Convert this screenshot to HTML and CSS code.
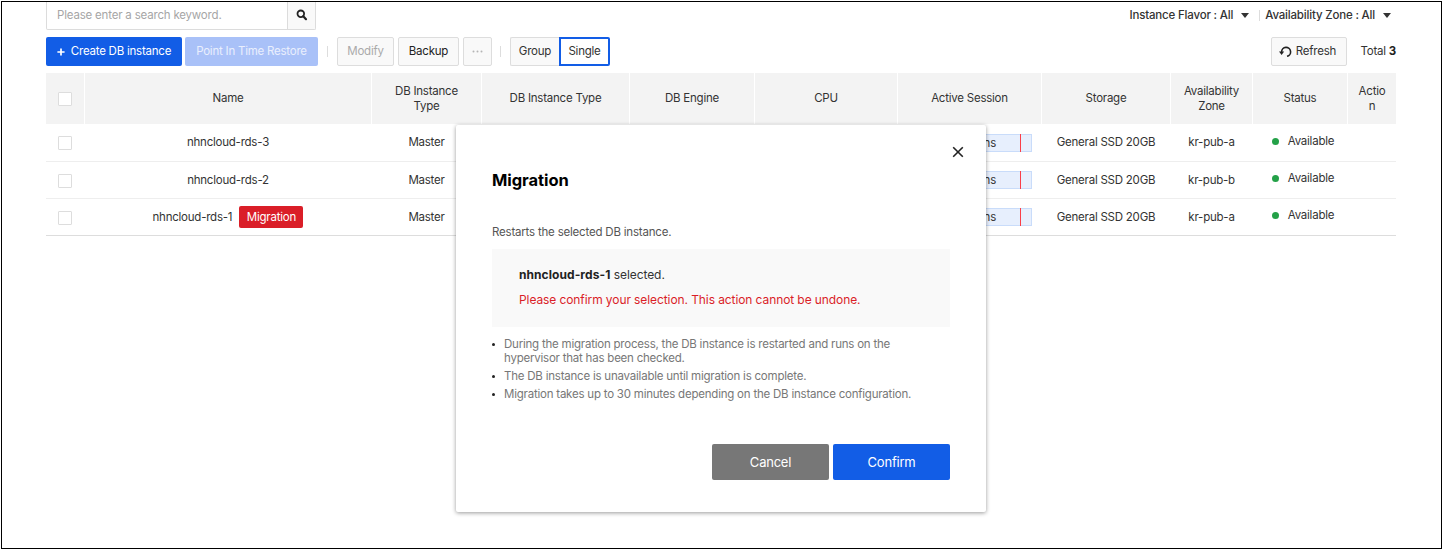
FILE: index.html
```html
<!DOCTYPE html>
<html lang="en">
<head>
<meta charset="utf-8">
<title>DB instances</title>
<link rel="stylesheet" href="styles.css">
</head>
<body>
<div class="frame">
  <div class="top-row">
    <div class="search">
      <div class="search-input">Please enter a search keyword.</div>
      <div class="search-button">
        <svg width="12" height="12" viewBox="0 0 12 12"><circle cx="4.8" cy="4.8" r="3.3" fill="none" stroke="#222" stroke-width="1.8"/><path d="M7.3 7.3L10 10.2" stroke="#222" stroke-width="2.2" stroke-linecap="round"/></svg>
      </div>
    </div>
    <div class="filters">
      <div class="filter"><span>Instance Flavor : All</span><i class="caret"></i></div>
      <div class="filter divided"><span>Availability Zone : All</span><i class="caret"></i></div>
    </div>
  </div>

  <div class="toolbar">
    <button class="btn primary create"><svg width="8" height="8" viewBox="0 0 8 8"><path d="M4 .4V7.6M.4 4H7.6" stroke="#fff" stroke-width="1.7"/></svg><span>Create DB instance</span></button>
    <button class="btn primary faded restore">Point In Time Restore</button>
    <i class="sep sep-first"></i>
    <button class="btn off modify">Modify</button>
    <button class="btn backup">Backup</button>
    <button class="btn off more"><svg width="11" height="3" viewBox="0 0 11 3" fill="#b5b5b5"><circle cx="1.5" cy="1.5" r="1"/><circle cx="5.5" cy="1.5" r="1"/><circle cx="9.5" cy="1.5" r="1"/></svg></button>
    <i class="sep sep-second"></i>
    <button class="btn group">Group</button>
    <button class="btn single">Single</button>
    <button class="btn refresh"><svg width="13" height="12" viewBox="0 0 13 12"><path d="M2.6 6.4V5.9A4.5 4.5 0 1 1 8 10.3" fill="none" stroke="#222" stroke-width="1.6"/><path d="M0 5.6H5.2L2.6 8.9Z" fill="#222"/></svg><span>Refresh</span></button>
    <div class="total">Total <b>3</b></div>
  </div>

  <div class="table">
    <div class="row head">
      <div><i class="check"></i></div><div>Name</div><div>DB Instance<br>Type</div><div>DB Instance Type</div><div>DB Engine</div><div>CPU</div><div>Active Session</div><div>Storage</div><div>Availability<br>Zone</div><div>Status</div><div>Actio<br>n</div>
    </div>
    <div class="row">
      <div><i class="check"></i></div><div>nhncloud-rds-3</div><div>Master</div><div></div><div></div><div></div><div><span class="meter">0 Sessions</span></div><div>General SSD 20GB</div><div>kr-pub-a</div><div class="status"><i class="dot"></i>Available</div><div></div>
    </div>
    <div class="row">
      <div><i class="check"></i></div><div>nhncloud-rds-2</div><div>Master</div><div></div><div></div><div></div><div><span class="meter">0 Sessions</span></div><div>General SSD 20GB</div><div>kr-pub-b</div><div class="status"><i class="dot"></i>Available</div><div></div>
    </div>
    <div class="row">
      <div><i class="check"></i></div><div>nhncloud-rds-1<span class="tag">Migration</span></div><div>Master</div><div></div><div></div><div></div><div><span class="meter">0 Sessions</span></div><div>General SSD 20GB</div><div>kr-pub-a</div><div class="status"><i class="dot"></i>Available</div><div></div>
    </div>
  </div>
</div>

<div class="modal">
  <svg class="close" width="12" height="12" viewBox="0 0 12 12"><path d="M1.2 1.2L10.8 10.8M10.8 1.2L1.2 10.8" stroke="#222" stroke-width="1.6"/></svg>
  <h2>Migration</h2>
  <p class="lead">Restarts the selected DB instance.</p>
  <div class="notice">
    <p class="selected"><b>nhncloud-rds-1</b> selected.</p>
    <p class="warn">Please confirm your selection. This action cannot be undone.</p>
  </div>
  <ul>
    <li>During the migration process, the DB instance is restarted and runs on the<br>hypervisor that has been checked.</li>
    <li>The DB instance is unavailable until migration is complete.</li>
    <li>Migration takes up to 30 minutes depending on the DB instance configuration.</li>
  </ul>
  <div class="actions"><button class="cancel">Cancel</button><button class="confirm">Confirm</button></div>
</div>
</body>
</html>
```
FILE: styles.css
```css
* { box-sizing: border-box; }
body { margin: 0; background: #fff; color: #333; font: 11.5px/15px Inter, sans-serif; letter-spacing: -.23px; overflow: hidden; }
button { font: inherit; letter-spacing: inherit; color: inherit; margin: 0; padding: 0; cursor: pointer; white-space: nowrap; }
.frame { width: 1441px; height: 548px; margin: 1px 0 0 1px; border: 1px solid #000; padding: 0 45px 0 44px; }

.top-row { display: flex; justify-content: space-between; height: 28px; }
.search { display: flex; width: 270px; height: 28px; border: 1px solid #dcdcdc; border-top: 0; border-radius: 0 0 2px 2px; }
.search-input { flex: 1; padding: 6px 0 0 10px; color: #a6a6a6; letter-spacing: -.19px; }
.search-button { width: 28px; padding: 7px 0 0 8px; border-left: 1px solid #dcdcdc; background: #f9f9f9; }
.filters { display: flex; padding-top: 6px; font-weight: 500; letter-spacing: -.18px; }
.filter { display: flex; align-items: center; height: 15px; white-space: nowrap; }
.divided { padding: 0 5px 0 0; }
.divided::before { content: ""; width: 1px; height: 11px; margin: 0 5px 0 10px; background: #ddd; }
.caret { margin-left: 8px; border: 4px solid transparent; border-top: 5px solid #333; border-bottom: 0; }

.toolbar { display: flex; align-items: center; height: 29px; margin-top: 7px; }
.btn { display: flex; align-items: center; justify-content: center; height: 29px; flex: none; background: #f9f9f9; border: 1px solid #ddd; border-radius: 2px; }
.primary { background: #125de6; border: 0; color: #fff; }
.faded { background: #a9c1f8; color: #e9effd; }
.off { color: #aaa; }
.create { width: 136px; gap: 6px; }
.restore { width: 133px; margin-left: 3px; }
.sep { width: 1px; height: 11px; background: #ddd; flex: none; }
.sep-first { margin: 0 9px; }
.modify { width: 57px; }
.backup { width: 61px; margin-left: 4px; color: #222; }
.more { width: 29px; margin-left: 4px; }
.sep-second { margin: 0 9px 0 8px; }
.group { width: 49px; border-right: 0; border-radius: 2px 0 0 2px; }
.single { width: 51px; border: 2px solid #125de6; border-radius: 0 2px 2px 0; background: #fff; }
.refresh { width: 76px; gap: 4px; margin-left: auto; padding-right: 3px; }
.total { width: 49px; text-align: right; white-space: nowrap; }
.total b { color: #222; }

.table { margin-top: 7px; }
.row { display: grid; grid-template-columns: 39px 287px 110px 148px 125px 143px 144px 129px 82px 95px 48px; height: 37px; border-bottom: 1px solid #eee; }
.row > div { display: flex; align-items: center; justify-content: center; border-right: 1px solid transparent; text-align: center; white-space: nowrap; }
.head { height: 51px; border: 0; line-height: 14.5px; }
.head > div { background: #f3f3f3; border-color: #fff; }
.row.head > div:last-child { border: 0; }
.head + .row { height: 38px; }
.row:last-child { border-color: #ddd; }
.check { width: 14px; height: 14px; border: 1px solid #ddd; background: #fff; border-radius: 1px; margin-top: 1px; }
.tag { height: 22px; line-height: 22px; padding: 0 7.5px; margin-left: 7px; border-radius: 2px; background: #da1e28; color: #fff; }
.meter { position: relative; width: 125px; height: 18px; line-height: 16px; padding-right: 4px; border: 1px solid #c9dcfa; background: #e7effd; }
.meter::after { content: ""; position: absolute; right: 10px; top: -1px; width: 1px; height: 18px; background: #fa3e48; }
.row > .status { padding: 0 0 3px 6px; }
.dot { width: 7px; height: 7px; margin-right: 9px; border-radius: 50%; background: #24a148; }

.modal { position: absolute; left: 456px; top: 125px; width: 530px; height: 387px; padding: 45px 36px 0; border-radius: 2px; background: #fff; box-shadow: 0 1px 4px rgba(0,0,0,.4); }
.close { position: absolute; right: 22px; top: 21px; }
h2 { margin: 0; color: #000; font-size: 16.5px; line-height: 20px; font-weight: 700; letter-spacing: -.05px; }
p { margin: 0; }
.lead { margin-top: 34px; line-height: 16px; color: #555; letter-spacing: -.2px; }
.notice { height: 78px; margin-top: 9px; padding: 18px 27px 0; background: #f9f9f9; font-size: 12px; line-height: 16px; letter-spacing: -.07px; }
.notice b { color: #222; letter-spacing: .07px; }
.warn { margin-top: 9px; color: #da1e28; letter-spacing: -.09px; }
ul { margin: 10px 0 0; padding: 0; list-style: none; color: #777; line-height: 14px; letter-spacing: -.22px; }
li { position: relative; padding-left: 12px; margin-bottom: 4px; white-space: nowrap; }
li::before { content: ""; position: absolute; left: 0; top: 6px; width: 3px; height: 3px; border-radius: 50%; background: #222; }
.actions { display: flex; justify-content: flex-end; gap: 4px; margin-top: 43px; font-size: 13px; color: #fff; }
.actions button { width: 117px; height: 36px; border: 0; border-radius: 2px; }
.cancel { background: #777; }
.confirm { background: #125de6; }
```
